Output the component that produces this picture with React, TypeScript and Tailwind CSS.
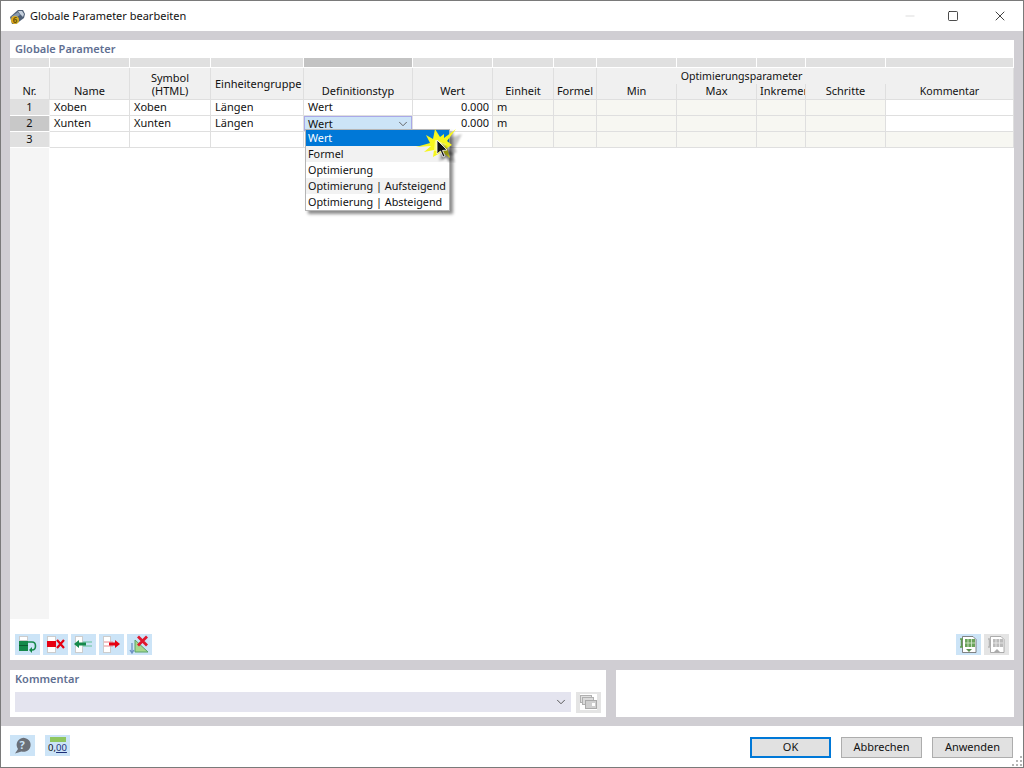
import { ChevronDown, Minus, Square, X } from 'lucide-react';

const font = "font-['Noto_Sans','Open_Sans',sans-serif]";

const cols = ['Nr.', 'Name', 'Symbol', 'Einheitengruppe', 'Definitionstyp', 'Wert', 'Einheit', 'Formel'];

const IconButton = ({ children, muted }: { children: React.ReactNode; muted?: boolean }) => (
  <button className={`w-[25px] h-[21px] flex items-center justify-center ${muted ? 'bg-[#e4e4e4]' : 'bg-[#cce4f7]'}`}>
    <svg width="25" height="21" viewBox="0 0 25 21">{children}</svg>
  </button>
);

const HeaderCell = ({ children, className = '' }: { children: React.ReactNode; className?: string }) => (
  <div className={`row-span-2 bg-[#f0f0f0] border-r border-b border-[#dfdfdf] flex items-end justify-center pb-[1px] leading-[15px] whitespace-nowrap ${className}`}>
    {children}
  </div>
);

const SubHeader = ({ label }: { label: string }) => (
  <div className="bg-[#f0f0f0] border-r border-b border-[#dfdfdf] flex items-end justify-center pb-[1px] leading-[15px] whitespace-nowrap">
    {label}
  </div>
);

const Cell = ({ children, className = '' }: { children?: React.ReactNode; className?: string }) => (
  <div className={`border-r border-b border-[#dfdfdf] leading-[14px] px-[4px] whitespace-nowrap overflow-hidden ${className}`}>
    {children}
  </div>
);

const Row = ({ nr, name, unit, active, last }: { nr: number; name: string; unit: string; active?: boolean; last?: boolean }) => (
  <>
    <div className={`border-r border-[#f0f0f0] border-b border-b-white leading-[13px] text-center ${active ? 'bg-[#c8c8c8]' : 'bg-[#e0e0e0]'}`}>{nr}</div>
    <Cell>{name}</Cell>
    <Cell>{name}</Cell>
    <Cell>{unit}</Cell>
    {active ? (
      <div className="border-r border-b border-[#dfdfdf] relative">
        <div className="absolute left-0 top-0 w-[108px] h-[15px] bg-[#cce4f7] border border-[#a9a9e8] flex items-center justify-between pl-[3px] leading-[13px]">
          <span>Wert</span>
          <ChevronDown className="w-[14px] h-[14px] text-[#555] mr-[1px]" strokeWidth={1.5} />
        </div>
      </div>
    ) : (
      <Cell>{last ? '' : 'Wert'}</Cell>
    )}
    <Cell className="text-right !pr-[3px]">{last ? '' : '0.000'}</Cell>
    <Cell className="bg-[#f7f7f2]">{last ? '' : 'm'}</Cell>
    <Cell className="bg-[#f7f7f2]" />
    <Cell className="bg-[#f7f7f2]" />
    <Cell className="bg-[#f7f7f2]" />
    <Cell className="bg-[#f7f7f2]" />
    <Cell className="bg-[#f7f7f2]" />
    <Cell className={last ? 'bg-[#f7f7f2]' : ''} />
  </>
);

const Dropdown = () => (
  <div className="absolute left-[295px] top-[89px] w-[145px] h-[82px] bg-white border border-[#b5b5b5] shadow-[3px_3px_3px_rgba(0,0,0,0.45)] leading-[15px] z-10 text-[10.8px]">
    <div className="h-[16px] bg-[#0078d7] text-white px-[2px]">Wert</div>
    <div className="h-[16px] bg-[#f2f2f2] px-[2px]">Formel</div>
    <div className="h-[16px] px-[2px]">Optimierung</div>
    <div className="h-[16px] bg-[#f2f2f2] px-[2px] whitespace-nowrap">Optimierung | Aufsteigend</div>
    <div className="h-[16px] px-[2px] whitespace-nowrap">Optimierung | Absteigend</div>
  </div>
);

const CursorBurst = () => (
  <svg className="absolute left-[405px] top-[87px] z-20" width="50" height="36" viewBox="0 0 50 36">
    <defs>
      <filter id="soft" x="-30%" y="-30%" width="160%" height="160%">
        <feGaussianBlur stdDeviation="1.2" />
      </filter>
    </defs>
    <polygon
      points="22,15 30,8 43,4 36,18 38,22 34,24 36,33 28,28 20,31 21,24"
      fill="#000"
      opacity="0.22"
      filter="url(#soft)"
      transform="translate(4,3)"
    />
    <polygon points="18,12 20,2 25,10 29,7 29,11 41,2 32,14 37,18 32,21 35,31 27,25 18,30 19,23 9,25 16,19 1,20 15,16 11,8" fill="#f6f61e" />
    <polygon points="20,13 31,17 27,24 19,24" fill="#fcfc7a" />
    <path d="M24 14 L36 26 L30 26 L33 32 L31 33 L28 27 L24 31 Z" fill="#000" opacity="0.4" filter="url(#soft)" transform="translate(3,2)" />
    <path d="M22 13 L22 27 L25.5 24 L28 30 L30 29 L27.5 23.5 L32 23 Z" fill="#111" stroke="#fff" strokeWidth="0.8" />
  </svg>
);

export default function App() {
  return (
    <div className={`${font} w-[1024px] h-[768px] flex flex-col bg-white border border-[#7a7a7a] text-[11px] text-[#111] relative overflow-hidden`}>
      {/* title bar */}
      <div className="h-[30px] flex items-center bg-white shrink-0">
        <svg className="ml-[8px] mr-[5px] mt-[1px]" width="16" height="16" viewBox="0 0 16 16">
          <path d="M1 8 L9 1 L14 1 L16 5 L15 9 L7 15 L3 15 Z" fill="#4e5f76" />
          <path d="M9 2 L13 2 L15 5 L14 8 L11 5 Z" fill="#c5d0dd" />
          <path d="M2 8 L9 3 L11 6 L5 10 Z" fill="#8a9bb0" />
          <circle cx="6" cy="11" r="4" fill="#dcae22" />
          <text x="3.8" y="14" fontSize="8" fontWeight="700" fill="#6a5208">6</text>
        </svg>
        <span className="text-[11px] leading-[16px]">Globale Parameter bearbeiten</span>
        <div className="ml-auto flex items-center text-[#111]">
          <Minus className="w-[14px] h-[14px] text-[#c4c4c4] mr-[30px]" strokeWidth={1} />
          <Square className="w-[12px] h-[12px] mr-[33px]" strokeWidth={1.5} />
          <X className="w-[16px] h-[16px] mr-[15px]" strokeWidth={1.2} />
        </div>
      </div>

      {/* content */}
      <div className="flex-1 bg-[#d0ced3] pl-[9px] pr-[9px] pt-[9px] flex flex-col gap-[10px]">
        <div className="h-[620px] bg-white flex flex-col relative shrink-0">
          <div className="h-[18px] pl-[5px] leading-[17px] font-semibold text-[#5f6f92]">Globale Parameter</div>

          <div className="grid grid-cols-[40px_80px_81px_93px_109px_80px_61px_43px_80px_80px_49px_80px_128px] grid-rows-[10px_16px_16px_16px_16px_16px]">
            {/* strip above the header */}
            {Array.from({ length: 13 }).map((_, i) => (
              <div key={i} className={`border-r border-b border-white ${i === 4 ? 'bg-[#c3c3c3]' : 'bg-[#e0e0e0]'}`} />
            ))}

            <HeaderCell>{cols[0]}</HeaderCell>
            <HeaderCell>{cols[1]}</HeaderCell>
            <HeaderCell>
              <div className="text-center leading-[13px] pb-[1px]">Symbol<br />(HTML)</div>
            </HeaderCell>
            <HeaderCell className="!items-center !pb-0 !justify-start pl-[4px]">{cols[3]}</HeaderCell>
            <HeaderCell>{cols[4]}</HeaderCell>
            <HeaderCell>{cols[5]}</HeaderCell>
            <HeaderCell>{cols[6]}</HeaderCell>
            <HeaderCell>{cols[7]}</HeaderCell>
            <div className="col-span-4 bg-[#f0f0f0] text-center leading-[16px] whitespace-nowrap text-[10.6px]">Optimierungsparameter</div>
            <HeaderCell className="text-[10.6px] !pb-0">Kommentar</HeaderCell>
            <SubHeader label="Min" />
            <SubHeader label="Max" />
            {/* column is too narrow for the label, it gets cut like in the real grid */}
            <div className="bg-[#f0f0f0] border-r border-b border-[#dfdfdf] flex items-end pl-[3px] pb-[1px] leading-[15px] whitespace-nowrap overflow-hidden">Inkrement</div>
            <SubHeader label="Schritte" />

            <Row nr={1} name="Xoben" unit="Längen" />
            <Row nr={2} name="Xunten" unit="Längen" active />
            <Row nr={3} name="" unit="" last />
          </div>

          <Dropdown />
          <CursorBurst />

          <div className="flex-1 w-[39px] bg-[#f5f5f5]" />

          {/* toolbar */}
          <div className="h-[41px] pt-[15px] px-[5px] flex gap-[3px]">
            <IconButton>
              <rect x="4.5" y="2.5" width="8" height="4" fill="#fff" stroke="#ccc" />
              <rect x="4" y="7" width="9" height="10" fill="#15894a" />
              <rect x="4" y="11" width="9" height="1" fill="#0b5c30" />
              <path d="M13 8 H17 Q20.5 8 20.5 12 Q20.5 16 17 16 H15" fill="none" stroke="#15894a" strokeWidth="1.6" />
              <path d="M17 13 L14 16 L17 19 Z" fill="#15894a" />
            </IconButton>
            <IconButton>
              <rect x="4.5" y="2.5" width="8" height="16" fill="#fff" stroke="#ccc" />
              <rect x="4" y="7" width="9" height="6" fill="#e60012" />
              <path d="M14 6 L21 14 M21 6 L14 14" stroke="#e60012" strokeWidth="2.2" />
            </IconButton>
            <IconButton>
              <rect x="4.5" y="2.5" width="7" height="16" fill="#fff" stroke="#ccc" />
              <path d="M12 8 H21 M12 12 H21" stroke="#63bf96" />
              <path d="M3 10 L8 6 V8.5 H15 V11.5 H8 V14 Z" fill="#15894a" />
            </IconButton>
            <IconButton>
              <rect x="4.5" y="2.5" width="7" height="16" fill="#fff" stroke="#ccc" />
              <path d="M5 8 H14 M5 12 H14" stroke="#e88a90" />
              <path d="M21 10 L16 6 V8.5 H10 V11.5 H16 V14 Z" fill="#e60012" />
            </IconButton>
            <IconButton>
              <path d="M5 9 V19 M3 16 L5 19 L7 16" stroke="#6f93c4" strokeWidth="1.3" fill="none" />
              <path d="M8 18 L8 6 L21 18 Z" fill="#a6d98b" stroke="#5aa36a" />
              <path d="M11 2.5 L20 11.5 M20 2.5 L11 11.5" stroke="#e0182d" strokeWidth="2.8" />
            </IconButton>
            <div className="ml-auto flex gap-[3px]">
              <IconButton>
                <path d="M6.5 2.5 H17 L20 5.5 V18.5 H6.5 Z" fill="#fff" stroke="#666" strokeWidth="0.8" />
                <path d="M4 5 H7 M4 13 H7 M5.5 5 V13" stroke="#5f9a50" strokeWidth="1.5" />
                <rect x="9" y="5" width="10" height="8" fill="#6aa35a" />
                <path d="M12 5 V13 M15.5 5 V13 M9 9 H19" stroke="#d8ecd0" strokeWidth="0.8" />
                <path d="M10 15 H16 L13 18 Z" fill="#5c8f4e" />
              </IconButton>
              <IconButton muted>
                <path d="M6.5 2.5 H17 L20 5.5 V18.5 H6.5 Z" fill="#fff" stroke="#999" strokeWidth="0.8" />
                <path d="M4 5 H7 M4 13 H7 M5.5 5 V13" stroke="#b5b5b5" strokeWidth="1.5" />
                <rect x="9" y="5" width="10" height="8" fill="#bbb" />
                <path d="M12 5 V13 M15.5 5 V13 M9 9 H19" stroke="#eee" strokeWidth="0.8" />
                <path d="M10 18 H16 L13 15 Z" fill="#aaa" />
              </IconButton>
            </div>
          </div>
        </div>

        {/* lower panels */}
        <div className="h-[47px] flex gap-[10px] shrink-0">
          <div className="w-[596px] bg-white px-[5px]">
            <div className="h-[22px] leading-[18px] font-semibold text-[#5f6f92]">Kommentar</div>
            <div className="flex gap-[5px]">
              <div className="w-[556px] h-[20px] bg-[#e4e4ef] flex items-center justify-end pr-[3px]">
                <ChevronDown className="w-[14px] h-[14px] text-[#444]" strokeWidth={1.5} />
              </div>
              <div className="w-[25px] h-[21px] bg-[#e4e4e4] flex items-center justify-center">
                <svg width="25" height="21" viewBox="0 0 25 21">
                  <rect x="4" y="2" width="17" height="16" fill="#fff" />
                  <rect x="4.5" y="3.5" width="11" height="7" fill="#e0e0e0" stroke="#b0b0b0" />
                  <rect x="6.5" y="5.5" width="11" height="7" fill="#dadada" stroke="#b0b0b0" />
                  <rect x="9.5" y="8.5" width="11" height="8" fill="#cfcfcf" stroke="#aaa" />
                  <rect x="16" y="11" width="3" height="3" fill="#fff" />
                </svg>
              </div>
            </div>
          </div>
          <div className="flex-1 bg-white" />
        </div>
      </div>

      {/* footer */}
      <div className="h-[42px] bg-white flex items-start shrink-0 border-t border-[#d0ced3] relative">
        <div className="pl-[9px] pt-[9px] flex gap-[10px]">
          <IconButton>
            <path d="M5 18.5 L8 14 A7 7 0 1 1 11.5 16.5 Z" fill="#6b7078" />
            <text x="9.5" y="13.5" fontSize="11" fontWeight="700" fill="#cce4f7">?</text>
          </IconButton>
          <button className="w-[25px] h-[21px] bg-[#cce4f7] flex flex-col items-center">
            <span className="block w-[16px] h-[5px] mt-[2px] bg-[#8fc65f]" />
            <span className="block text-[9.5px] leading-[12px] text-[#111]">0,<span className="underline text-[#1c2f78]">00</span></span>
          </button>
        </div>
        <div className="ml-auto pt-[11px] pr-[10px] flex gap-[10px] text-[11px]">
          <button className="w-[81px] h-[21px] bg-[#e1e1e1] border-2 border-[#0078d7] leading-[14px] pb-[2px]">OK</button>
          <button className="w-[81px] h-[21px] bg-[#e1e1e1] border border-[#adadad] leading-[16px] pb-[2px]">Abbrechen</button>
          <button className="w-[81px] h-[21px] bg-[#e1e1e1] border border-[#adadad] leading-[16px] pb-[2px]">Anwenden</button>
        </div>
        {/* size grip */}
        <svg className="absolute right-0 bottom-0" width="12" height="12" viewBox="0 0 12 12">
          <path d="M9 1h2v2H9zM5 5h2v2H5zM9 5h2v2H9zM1 9h2v2H1zM5 9h2v2H5zM9 9h2v2H9z" fill="#b5b5b5" />
        </svg>
      </div>
    </div>
  );
}
